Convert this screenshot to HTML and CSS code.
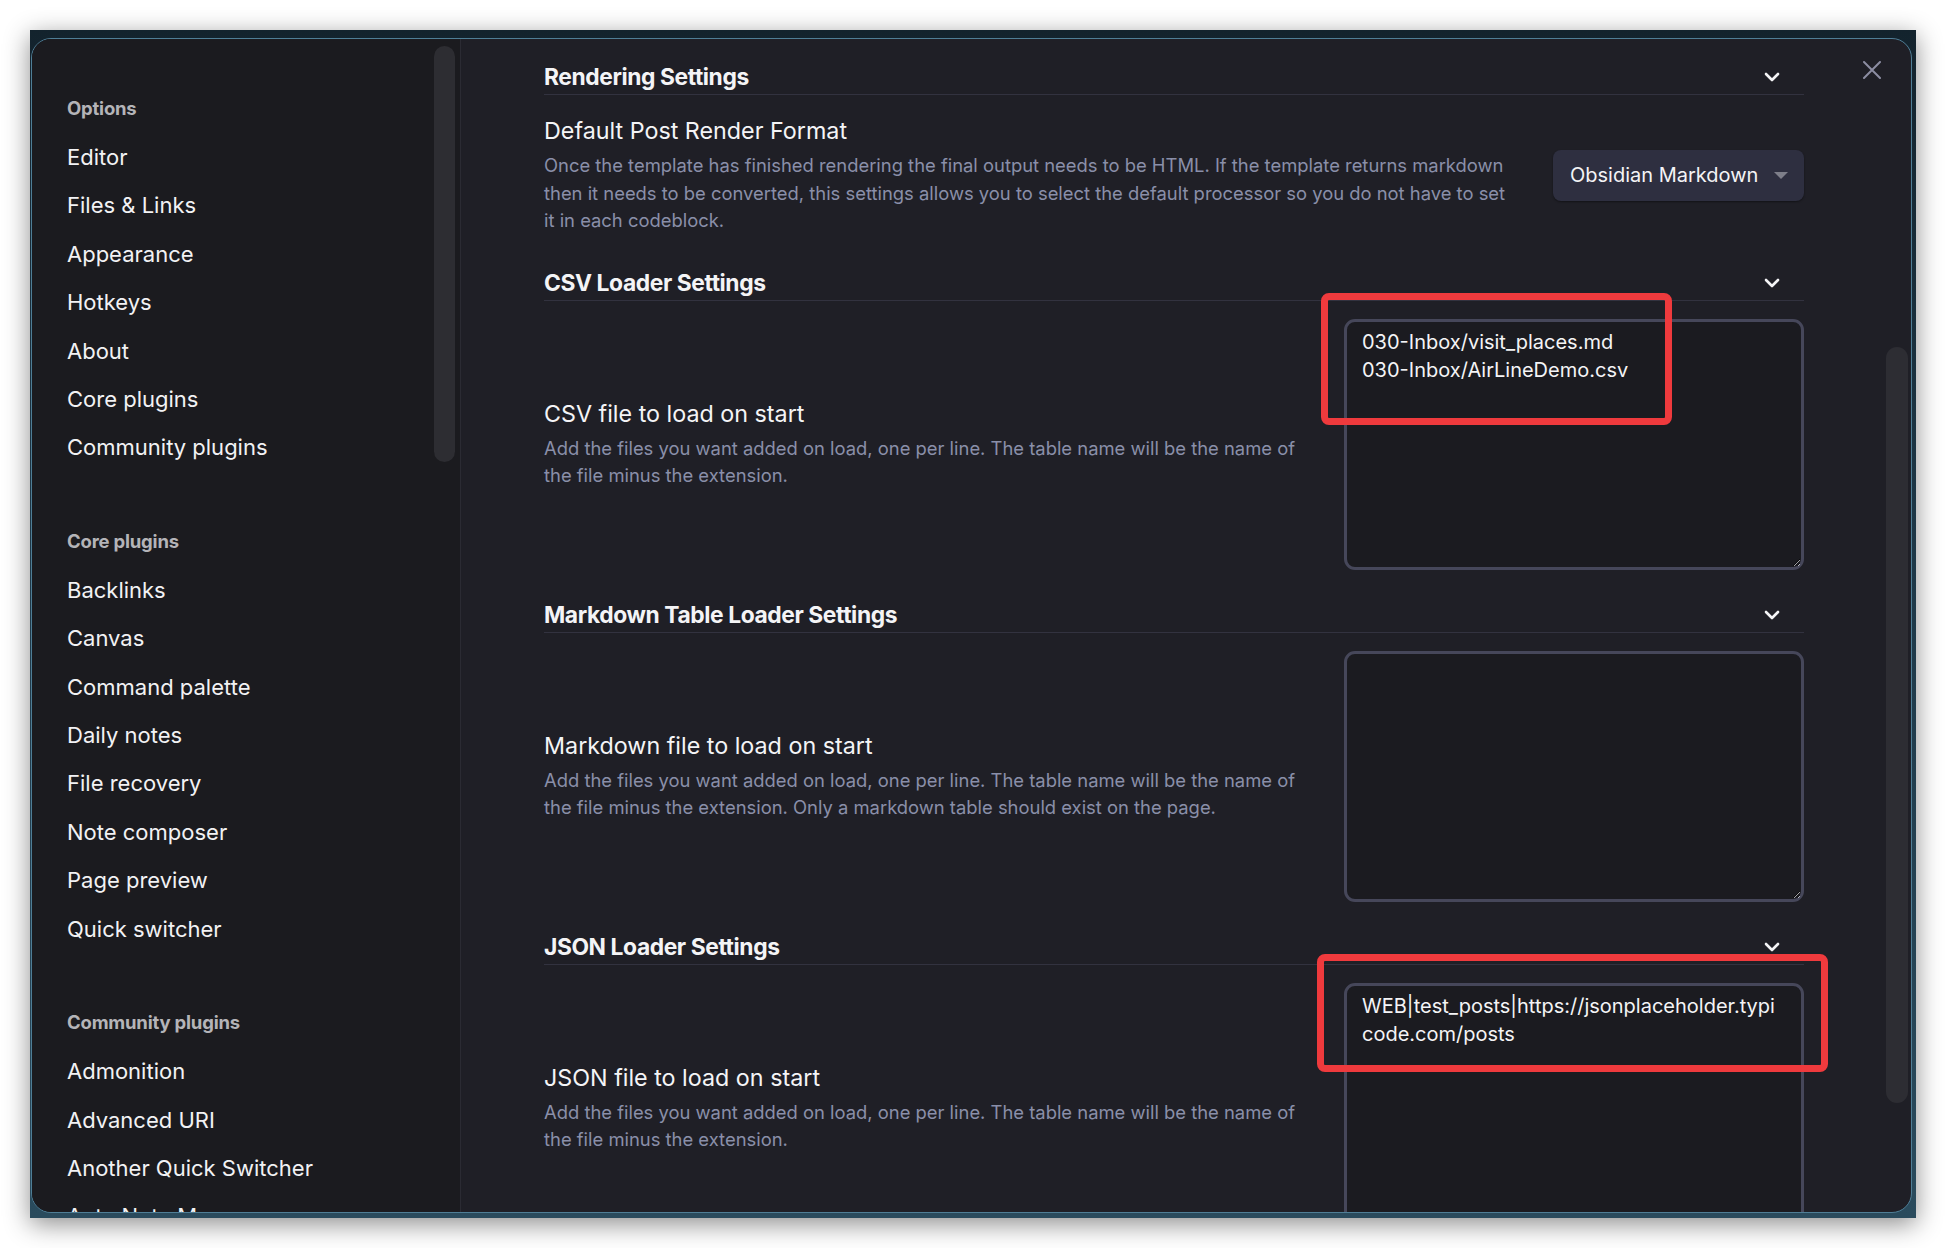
FILE: index.html
```html
<!DOCTYPE html>
<html lang="en">
<head>
<meta charset="utf-8">
<title>Settings</title>
<link rel="stylesheet" href="styles.css">
</head>
<body>
<div class="frame">
  <div class="modal">
    <nav class="sidebar">
      <div class="nav-group">
        <div class="nav-title">Options</div>
        <div class="nav-item">Editor</div>
        <div class="nav-item">Files &amp; Links</div>
        <div class="nav-item">Appearance</div>
        <div class="nav-item">Hotkeys</div>
        <div class="nav-item">About</div>
        <div class="nav-item">Core plugins</div>
        <div class="nav-item">Community plugins</div>
      </div>
      <div class="nav-group">
        <div class="nav-title">Core plugins</div>
        <div class="nav-item">Backlinks</div>
        <div class="nav-item">Canvas</div>
        <div class="nav-item">Command palette</div>
        <div class="nav-item">Daily notes</div>
        <div class="nav-item">File recovery</div>
        <div class="nav-item">Note composer</div>
        <div class="nav-item">Page preview</div>
        <div class="nav-item">Quick switcher</div>
      </div>
      <div class="nav-group">
        <div class="nav-title">Community plugins</div>
        <div class="nav-item">Admonition</div>
        <div class="nav-item">Advanced URI</div>
        <div class="nav-item">Another Quick Switcher</div>
        <div class="nav-item">Auto Note Mover</div>
      </div>
      <div class="sidebar-thumb"></div>
    </nav>

    <main class="content">
      <section class="section">
        <h2 class="heading"><span>Rendering Settings</span>
          <svg class="chevron" width="16" height="10" viewBox="0 0 16 10"><polyline points="2,2 8,8 14,2"/></svg>
        </h2>
        <div class="setting setting-dropdown">
          <div class="info">
            <div class="name">Default Post Render Format</div>
            <div class="desc">Once the template has finished rendering the final output needs to be HTML. If the template returns markdown then it needs to be converted, this settings allows you to select the default processor so you do not have to set it in each codeblock.</div>
          </div>
          <div class="dropdown"><span>Obsidian Markdown</span><span class="caret"></span></div>
        </div>
      </section>

      <section class="section">
        <h2 class="heading"><span>CSV Loader Settings</span>
          <svg class="chevron" width="16" height="10" viewBox="0 0 16 10"><polyline points="2,2 8,8 14,2"/></svg>
        </h2>
        <div class="setting">
          <div class="info">
            <div class="name">CSV file to load on start</div>
            <div class="desc">Add the files you want added on load, one per line. The table name will be the name of the file minus the extension.</div>
          </div>
          <div class="control">
            <textarea class="area" spellcheck="false">030-Inbox/visit_places.md
030-Inbox/AirLineDemo.csv</textarea>
            <div class="mark mark-csv"></div>
          </div>
        </div>
      </section>

      <section class="section">
        <h2 class="heading"><span>Markdown Table Loader Settings</span>
          <svg class="chevron" width="16" height="10" viewBox="0 0 16 10"><polyline points="2,2 8,8 14,2"/></svg>
        </h2>
        <div class="setting">
          <div class="info">
            <div class="name">Markdown file to load on start</div>
            <div class="desc">Add the files you want added on load, one per line. The table name will be the name of the file minus the extension. Only a markdown table should exist on the page.</div>
          </div>
          <div class="control">
            <textarea class="area" spellcheck="false"></textarea>
          </div>
        </div>
      </section>

      <section class="section">
        <h2 class="heading"><span>JSON Loader Settings</span>
          <svg class="chevron" width="16" height="10" viewBox="0 0 16 10"><polyline points="2,2 8,8 14,2"/></svg>
        </h2>
        <div class="setting">
          <div class="info">
            <div class="name">JSON file to load on start</div>
            <div class="desc">Add the files you want added on load, one per line. The table name will be the name of the file minus the extension.</div>
          </div>
          <div class="control">
            <textarea class="area" spellcheck="false">WEB|test_posts|https://jsonplaceholder.typicode.com/posts</textarea>
            <div class="mark mark-json"></div>
          </div>
        </div>
      </section>
    </main>

    <div class="content-thumb"></div>
    <div class="close">
      <svg width="18" height="18" viewBox="0 0 18 18"><path d="M1 1 L17 17 M17 1 L1 17"/></svg>
    </div>
  </div>
</div>
</body>
</html>
```

FILE: styles.css
```css
* { box-sizing: border-box; }

html, body {
  margin: 0;
  padding: 0;
  background: #ffffff;
  font-family: "Inter", "Roboto", sans-serif;
}

.frame {
  margin: 30px;
  width: 1886px;
  height: 1188px;
  padding: 8px 4px 5px 1px;
  background: linear-gradient(180deg, #13232d 0%, #1d3645 40%, #2a4b5d 100%);
  box-shadow: 0 6px 24px rgba(0, 0, 0, 0.45);
}

.modal {
  position: relative;
  display: flex;
  height: 100%;
  border: 1px solid #4f7e96;
  border-radius: 20px;
  background: #1f1f26;
  overflow: hidden;
}

/* ---------- sidebar ---------- */
.sidebar {
  position: relative;
  flex: 0 0 429px;
  padding: 44px 0 0 35px;
  background: #1b1b1f;
  border-right: 1px solid #2b2b33;
  overflow: hidden;
}

.nav-group + .nav-group { margin-top: 44px; }

.nav-title {
  line-height: 50px;
  font-size: 18.5px;
  font-weight: 700;
  color: #b4b4b8;
  letter-spacing: -0.2px;
}

.nav-item {
  line-height: 48.4px;
  font-size: 22px;
  color: #f2f2f4;
  white-space: nowrap;
}

.sidebar-thumb {
  position: absolute;
  top: 7px;
  right: 5px;
  width: 21px;
  height: 416px;
  border-radius: 11px;
  background: #2d2d32;
}

/* ---------- content ---------- */
.content {
  flex: 1;
  padding: 24px 107px 0 83px;
  overflow: hidden;
}

.section + .section .heading { margin-top: 31px; }

.heading {
  display: flex;
  align-items: center;
  justify-content: space-between;
  margin: 0;
  padding: 0 24px 3px 0;
  line-height: 28px;
  font-size: 22.8px;
  font-weight: 700;
  color: #f4f4f6;
  letter-spacing: -0.4px;
  border-bottom: 1px solid #32323f;
}

.chevron {
  fill: none;
  stroke: #f4f4f6;
  stroke-width: 2.6;
  stroke-linecap: round;
  stroke-linejoin: round;
}

.setting {
  display: flex;
  align-items: center;
  gap: 36px;
  padding-top: 18px;
}

.setting-dropdown { padding: 21px 0 3px; }

.info { flex: 1; min-width: 0; }

.name {
  line-height: 30px;
  font-size: 23.3px;
  color: #f4f4f6;
}

.desc {
  margin-top: 6px;
  line-height: 27.5px;
  font-size: 18.4px;
  color: #8a8fa9;
}

.dropdown {
  flex: 0 0 251px;
  display: flex;
  align-items: center;
  justify-content: space-between;
  height: 51px;
  padding: 0 16px 0 17px;
  border-radius: 8px;
  background: #2e2f40;
  box-shadow: 0 1px 2px rgba(0, 0, 0, 0.4);
  font-size: 20px;
  color: #f4f4f6;
}

.caret {
  width: 0;
  height: 0;
  border-left: 7px solid transparent;
  border-right: 7px solid transparent;
  border-top: 7px solid #7e7f8a;
}

.control {
  position: relative;
  flex: 0 0 460px;
}

.area {
  display: block;
  width: 460px;
  height: 251px;
  margin: 0;
  padding: 6px 15px;
  border: 3px solid #46475a;
  border-radius: 11px;
  background: #1b1b20;
  color: #f4f4f6;
  font-family: "Inter", "Roboto", sans-serif;
  font-size: 20px;
  line-height: 28.5px;
  resize: vertical;
  outline: none;
  overflow: hidden;
}

.mark {
  position: absolute;
  border: 7px solid #ef3a3d;
  border-radius: 8px;
  pointer-events: none;
}

.mark-csv {
  left: -23px;
  top: -26px;
  width: 351px;
  height: 132px;
}

.mark-json {
  left: -27px;
  top: -29px;
  width: 511px;
  height: 118px;
}

.content-thumb {
  position: absolute;
  top: 308px;
  right: 3px;
  width: 22px;
  height: 756px;
  border-radius: 11px;
  background: #2d2d33;
}

.close {
  position: absolute;
  top: 22px;
  right: 30px;
  width: 18px;
  height: 18px;
}

.close svg {
  display: block;
  fill: none;
  stroke: #8c8da2;
  stroke-width: 2;
  stroke-linecap: round;
}
```
